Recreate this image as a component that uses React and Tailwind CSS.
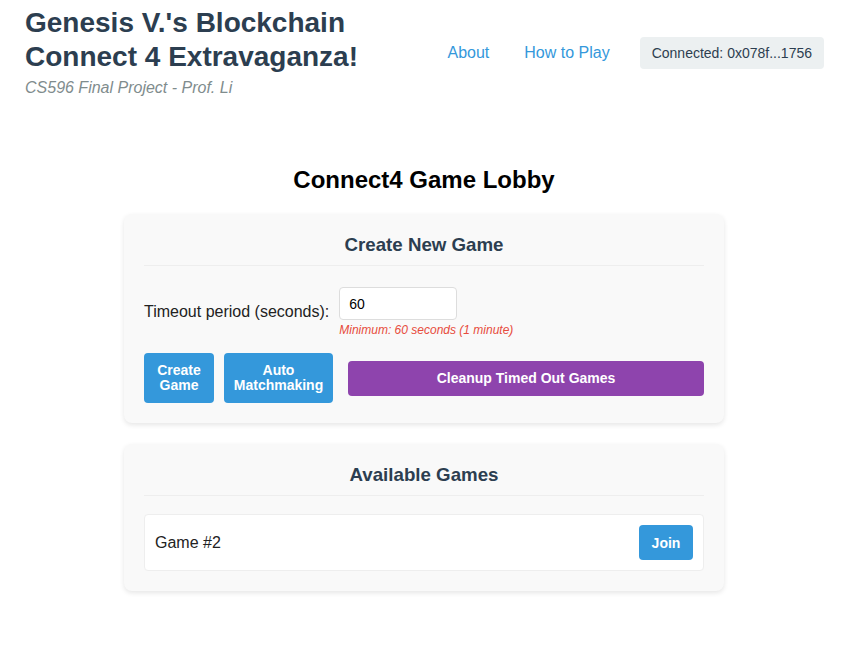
import React from "react";

const font = { fontFamily: '"Liberation Sans", Arial, sans-serif' };

const Header = () => (
  <header className="flex items-center justify-between pl-[25px] pr-[44px] pt-[6px]">
    <div>
      <h1 className="text-[28px] font-bold leading-[34px] text-[#2c3e50]">
        Genesis V.'s Blockchain
        <br />
        Connect 4 Extravaganza!
      </h1>
      <p className="mt-[2px] text-base italic leading-6 text-[#7f8c8d]">
        CS596 Final Project - Prof. Li
      </p>
    </div>
    <nav className="flex items-center text-base text-[#3498db]">
      <a className="mr-[35px]">About</a>
      <a className="mr-[30px]">How to Play</a>
      <div className="rounded bg-[#ecf0f1] px-3 py-2 text-sm leading-4 text-[#2c3e50]">
        Connected: 0x078f...1756
      </div>
    </nav>
  </header>
);

const Card = ({ title, children, className = "" }) => (
  <div
    className={
      "rounded-lg bg-[#f9f9f9] px-5 pt-[19px] pb-5 shadow-[0_2px_5px_rgba(0,0,0,0.1)] " +
      className
    }
  >
    <h3 className="border-b border-[#eee] pb-[9px] text-center text-[18.72px] font-bold leading-[23px] text-[#2c3e50]">
      {title}
    </h3>
    {children}
  </div>
);

export default function App() {
  return (
    <div className="min-h-[658px] bg-white text-[#222]" style={font}>
      <Header />

      <main className="flex justify-center pr-[20px]">
        <div className="w-[600px]">
          <h2 className="mt-[66px] mb-5 text-center text-2xl font-bold leading-7 text-black">
            Connect4 Game Lobby
          </h2>

          <Card title="Create New Game">
            <div className="mt-[21px] flex items-center">
              <label className="mr-[10px] text-base">Timeout period (seconds):</label>
              <div className="flex flex-col">
                <input
                  type="number"
                  defaultValue="60"
                  className="h-[33px] w-[118px] rounded border border-[#ddd] bg-white px-[9px] text-sm text-black outline-none"
                />
                <span className="mt-[3px] text-xs italic leading-[14px] text-[#e74c3c]">
                  Minimum: 60 seconds (1 minute)
                </span>
              </div>
            </div>

            <div className="mt-4 flex items-center gap-[10px]">
              <button className="w-[70px] rounded bg-[#3498db] py-[10px] text-sm font-bold leading-[15px] text-white">
                Create Game
              </button>
              <button className="w-[109px] rounded bg-[#3498db] py-[10px] text-sm font-bold leading-[15px] text-white">
                Auto Matchmaking
              </button>
              <button className="ml-[5px] flex-1 rounded bg-[#8e44ad] py-[10px] text-sm font-bold leading-[15px] text-white">
                Cleanup Timed Out Games
              </button>
            </div>
          </Card>

          <Card title="Available Games" className="mt-[21px]">
            <div className="mt-[18px] flex items-center justify-between rounded border border-[#eee] bg-white p-[10px]">
              <span className="text-base">Game #2</span>
              <button className="h-[35px] w-[54px] rounded bg-[#3498db] text-sm font-bold text-white">
                Join
              </button>
            </div>
          </Card>
        </div>
      </main>
    </div>
  );
}
